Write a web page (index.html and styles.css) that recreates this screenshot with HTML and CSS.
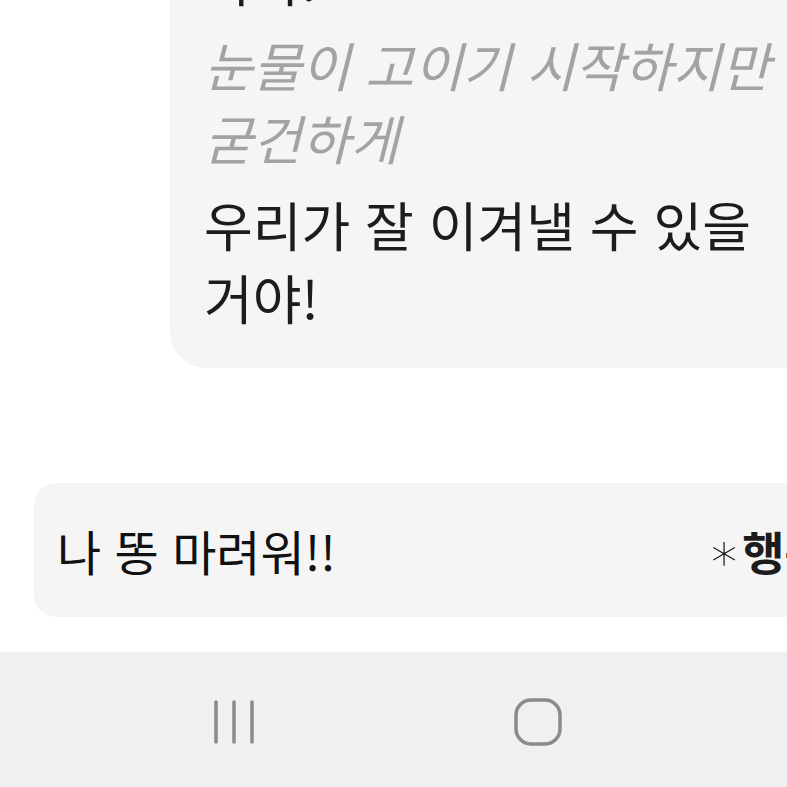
FILE: index.html
```html
<!DOCTYPE html>
<html lang="ko">
<head>
<meta charset="utf-8">
<link rel="stylesheet" href="styles.css">
</head>
<body>
<div class="screen">
  <main class="chat">
    <div class="bubble">
      <p class="msg">힘들어도 괜찮아.<br>아파.</p>
      <p class="quote">눈물이 고이기 시작하지만<br>굳건하게</p>
      <p class="msg">우리가 잘 이겨낼 수 있을<br>거야!</p>
    </div>
    <div class="composer">
      <span class="typed">나 똥 마려워!!</span>
      <span class="hint"><span class="star">∗</span><b>행복한 하루</b></span>
    </div>
  </main>
  <nav class="navbar">
    <svg class="nav-icon" width="50" height="46" viewBox="0 0 50 46">
      <line x1="7" y1="3" x2="7" y2="43"/>
      <line x1="25" y1="3" x2="25" y2="43"/>
      <line x1="43" y1="3" x2="43" y2="43"/>
    </svg>
    <svg class="nav-icon" width="50" height="48" viewBox="0 0 50 48">
      <rect x="3" y="2" width="44" height="44" rx="15"/>
    </svg>
  </nav>
</div>
</body>
</html>
```

FILE: styles.css
```css
* { box-sizing: border-box; }
html, body {
  margin: 0;
  padding: 0;
  background: #ffffff;
  overflow: hidden;
}
.screen {
  width: 787px;
  height: 787px;
  display: flex;
  flex-direction: column;
  font-family: "Noto Sans CJK KR", "Noto Sans", sans-serif;
}
.chat {
  flex: 1;
  display: flex;
  flex-direction: column;
  justify-content: flex-end;
  overflow: hidden;
  padding-bottom: 35px;
}
.bubble {
  margin-left: 170px;
  width: 700px;
  flex-shrink: 0;
  background: #f5f5f5;
  border-radius: 0 0 0 36px;
  padding: 0 0 34px 34px;
  margin-bottom: 115px;
}
.bubble p {
  margin: 0;
  font-size: 53px;
  line-height: 73px;
  letter-spacing: 0;
  white-space: nowrap;
}
.msg { color: #1c1c1c; }
.quote {
  color: #a3a3a3;
  font-style: italic;
  margin-top: 12px !important;
  margin-bottom: 14px !important;
}
.composer {
  margin-left: 34px;
  width: 900px;
  height: 134px;
  flex-shrink: 0;
  background: #f5f5f5;
  border-radius: 22px;
  display: flex;
  align-items: center;
  gap: 372px;
  padding-left: 23px;
  white-space: nowrap;
}
.typed {
  font-size: 48px;
  color: #111;
}
.hint {
  font-size: 46px;
  color: #1c1c1c;
  display: flex;
  align-items: center;
}
.star {
  font-weight: 300;
  font-family: "DejaVu Sans", sans-serif;
  font-size: 52px;
  color: #111;
  margin-right: 2px;
  position: relative;
  top: 2px;
}
.hint b { font-weight: 700; }
.navbar {
  height: 135px;
  flex-shrink: 0;
  background: #f0f0f2;
  display: flex;
  align-items: center;
  justify-content: flex-start;
  gap: 254px;
  padding: 5px 0 0 209px;
}
.nav-icon line, .nav-icon rect {
  stroke: #8a8a8a;
  stroke-width: 3.5;
  stroke-linecap: round;
  fill: none;
}
```
